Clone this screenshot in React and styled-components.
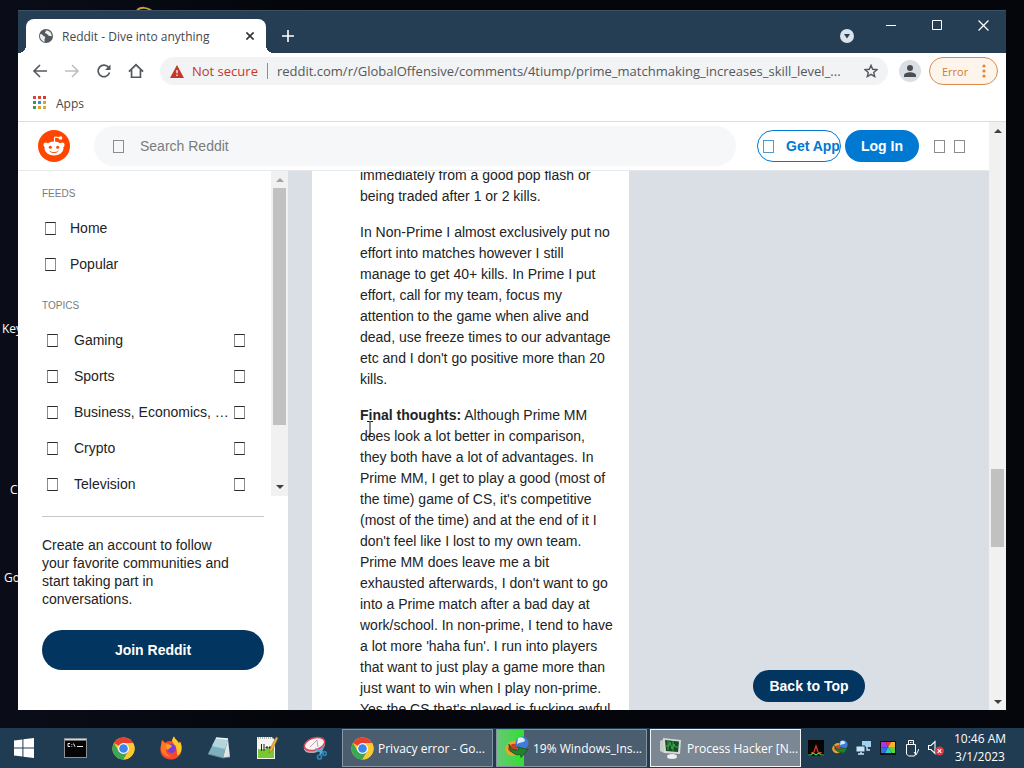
import React from "react";
import styled, { createGlobalStyle, css } from "styled-components";

const uiFont = `"Open Sans", "Noto Sans", sans-serif`;
const pageFont = `"Liberation Sans", Arial, sans-serif`;

const GlobalStyle = createGlobalStyle`
  *, *::before, *::after {
    box-sizing: border-box;
  }
  body {
    margin: 0;
    background: #04060b;
  }
  button, input {
    font: inherit;
    color: inherit;
    border: 0;
    padding: 0;
    margin: 0;
    background: none;
  }
  p, h2, ul {
    margin: 0;
    padding: 0;
  }
  ul {
    list-style: none;
  }
  a {
    color: inherit;
    text-decoration: none;
  }
  svg {
    display: block;
    flex: none;
  }
`;

const Screen = styled.div`
  display: flex;
  flex-direction: column;
  height: 100vh;
  overflow: hidden;
  font-family: ${uiFont};
  font-size: 12px;
  background: linear-gradient(90deg, #0a0d18 0, #04060b 30%);
`;

const Desktop = styled.div`
  position: relative;
  display: flex;
  flex: 1;
  min-height: 0;
  padding: 10px 18px 18px;
`;

const DesktopLabel = styled.span`
  position: absolute;
  left: ${({ $left }) => $left}px;
  top: ${({ $top }) => $top}px;
  line-height: 16px;
  color: #fff;
`;

const DesktopMark = styled.svg`
  position: absolute;
  left: 134px;
  top: 6px;
`;

const Window = styled.main`
  position: relative;
  display: flex;
  flex: 1;
  flex-direction: column;
  min-width: 0;
  min-height: 0;
  overflow: hidden;
  background: #fff;
`;

/* browser chrome */

const TitleBar = styled.div`
  display: flex;
  align-items: flex-start;
  height: 43px;
  flex: none;
  padding-left: 8px;
  background: #253e53;
  border-top: 1px solid #3c5164;
  color: #fff;
`;

const Tab = styled.div`
  position: relative;
  display: flex;
  align-items: center;
  gap: 8px;
  width: 240px;
  height: 34px;
  margin-top: 8px;
  padding: 0 8px 0 12px;
  border-radius: 8px 8px 0 0;
  background: #fff;
  color: #45494d;

  &::before,
  &::after {
    content: "";
    position: absolute;
    bottom: 0;
    width: 8px;
    height: 8px;
  }
  &::before {
    right: 100%;
    background: radial-gradient(circle at 0 0, #253e53 8px, #fff 8px);
  }
  &::after {
    left: 100%;
    background: radial-gradient(circle at 100% 0, #253e53 8px, #fff 8px);
  }
`;

const TabTitle = styled.span`
  flex: 1;
  white-space: nowrap;
`;

const IconButton = styled.button`
  display: flex;
  align-items: center;
  justify-content: center;
  flex: none;
  width: ${({ $size = 32 }) => $size}px;
  height: ${({ $size = 32 }) => $size}px;
  color: ${({ $color = "#54585c" }) => $color};
`;

const NewTab = styled(IconButton)`
  margin: 9px 0 0 6px;
`;

const SearchTabs = styled(IconButton)`
  margin: 9px 5px 0 auto;
`;

const WindowButtons = styled.div`
  display: flex;
`;

const WindowButton = styled.button`
  display: flex;
  align-items: center;
  justify-content: center;
  width: 46px;
  height: 28px;
  color: #fff;
`;

const Toolbar = styled.div`
  display: flex;
  align-items: center;
  height: 36px;
  flex: none;
  padding: 0 8px 0 6px;
`;

const AddressBar = styled.div`
  display: flex;
  align-items: center;
  flex: 1;
  min-width: 0;
  height: 28px;
  margin: 0 11px 0 8px;
  padding: 0 3px 0 10px;
  border-radius: 14px;
  background: #f1f3f4;
`;

const NotSecure = styled.button`
  display: flex;
  align-items: center;
  gap: 8px;
  padding-right: 9px;
  border-right: 1px solid #8b8f93;
  font-size: 13px;
  line-height: 16px;
  color: #c5372c;
  white-space: nowrap;
`;

const UrlInput = styled.input`
  flex: 1;
  min-width: 0;
  margin-left: 9px;
  outline: 0;
  font-size: 13px;
  line-height: 20px;
  color: #54585c;
  text-overflow: ellipsis;
`;

const Avatar = styled.button`
  display: flex;
  align-items: center;
  justify-content: center;
  width: 22px;
  height: 22px;
  margin-right: 8px;
  border-radius: 50%;
  background: #dadee5;
`;

const ErrorButton = styled.button`
  display: flex;
  align-items: center;
  justify-content: space-between;
  width: 69px;
  height: 28px;
  padding: 0 11px 0 12px;
  border: 1px solid #d98b4a;
  border-radius: 14px;
  background: #fdf5ec;
  font-size: 11px;
  color: #d47a2e;
`;

const Bookmarks = styled.div`
  display: flex;
  align-items: center;
  height: 33px;
  flex: none;
  padding: 0 14px 4px;
  border-bottom: 1px solid #d9dce0;
  color: #45494d;
`;

const AppsButton = styled.button`
  display: flex;
  align-items: center;
  gap: 10px;
`;

/* web page */

const Viewport = styled.div`
  display: flex;
  flex: 1;
  min-height: 0;
  font-family: ${pageFont};
  font-size: 14px;
  color: #222324;
`;

const Page = styled.div`
  display: flex;
  flex: 1;
  flex-direction: column;
  min-width: 0;
`;

const Header = styled.header`
  display: flex;
  align-items: center;
  height: 49px;
  flex: none;
  padding: 0 24px 0 20px;
  border-bottom: 1px solid #e6e8eb;
`;

const Search = styled.label`
  display: flex;
  align-items: center;
  flex: 1;
  gap: 16px;
  min-width: 0;
  height: 40px;
  margin: 0 21px 0 24px;
  padding: 0 19px;
  border-radius: 20px;
  background: #f6f7f8;
`;

const SearchInput = styled.input`
  flex: 1;
  min-width: 0;
  outline: 0;

  &::placeholder {
    color: #787c7e;
    opacity: 1;
  }
`;

const MissingGlyph = styled.span`
  display: inline-block;
  flex: none;
  width: 11px;
  height: 13px;
  border: 1px solid;
  border-color: ${({ $tone = "#2c2c2c" }) => $tone} #8c8c8c;
`;

const pill = css`
  display: flex;
  align-items: center;
  justify-content: center;
  height: 32px;
  border-radius: 20px;
  font-weight: 700;
  white-space: nowrap;
`;

const GetApp = styled.button`
  ${pill};
  justify-content: flex-start;
  gap: 12px;
  width: 84px;
  padding-left: 5px;
  border: 1px solid #0079d3;
  color: #0079d3;
`;

const LogIn = styled.button`
  ${pill};
  width: 74px;
  margin: 0 15px 0 4px;
  background: #0079d3;
  color: #fff;
`;

const HeaderIcons = styled.div`
  display: flex;
  gap: 9px;
`;

const Body = styled.div`
  position: relative;
  display: flex;
  flex: 1;
  min-height: 0;
  overflow: hidden;
  background: #dadee5;
`;

const Sidebar = styled.aside`
  display: flex;
  flex-direction: column;
  flex: none;
  width: 270px;
  background: #fff;
`;

const SidebarScroll = styled.div`
  display: flex;
  flex: 1;
  min-height: 0;
`;

const Nav = styled.nav`
  flex: 1;
  min-width: 0;
  overflow: hidden;
  padding: 0 26px 0 24px;
`;

const NavTitle = styled.h2`
  padding: 15px 0 9px;
  font-size: 10px;
  font-weight: 400;
  line-height: 15px;
  text-transform: uppercase;
  color: #787c7e;
`;

const NavList = styled.ul`
  padding-bottom: 1px;
`;

const NavLink = styled.a`
  display: flex;
  align-items: center;
  gap: 14px;
  height: 36px;
  padding-left: 3px;
`;

const TopicButton = styled.button`
  display: flex;
  align-items: center;
  justify-content: space-between;
  width: 100%;
  height: 36px;
  padding-left: 5px;
  text-align: left;
`;

const TopicName = styled.span`
  display: flex;
  align-items: center;
  gap: 16px;
  line-height: 18px;
  white-space: nowrap;
`;

const SignUp = styled.section`
  flex: none;
  margin: 20px 24px 0;
  padding: 19px 0 40px;
  border-top: 1px solid #c4c7ca;
`;

const SignUpText = styled.p`
  max-width: 192px;
  line-height: 18px;
`;

const JoinButton = styled.button`
  ${pill};
  width: 100%;
  height: 40px;
  margin-top: 22px;
  background: #02355f;
  color: #fff;
`;

const Post = styled.article`
  flex: 0 1 317px;
  align-self: flex-start;
  margin-left: 24px;
  padding: 0 16px 0 48px;
  background: #fff;
`;

const PostText = styled.div`
  display: grid;
  gap: 15px;
  margin-top: -6px;
  line-height: 21px;
`;

const BackToTop = styled.button`
  ${pill};
  position: absolute;
  right: 124px;
  bottom: 8px;
  width: 112px;
  background: #02355f;
  color: #fff;
`;

const Cursor = styled.svg`
  position: absolute;
  left: 348px;
  top: 250px;
`;

const Scrollbar = styled.div`
  display: grid;
  grid-template-rows: 17px ${({ $before }) => $before}fr ${({ $thumb }) => $thumb}fr ${({ $after }) => $after}fr 17px;
  flex: none;
  width: 17px;
  background: #f1f1f1;
`;

const Thumb = styled.span`
  grid-row: 3;
  margin: 0 2px;
  background: #c1c1c1;
`;

const ScrollArrow = styled.button`
  grid-row: ${({ $down }) => ($down ? 5 : 1)};
  display: flex;
  align-items: center;
  justify-content: center;
  color: ${({ $off }) => ($off ? "#a3a3a3" : "#404040")};
`;

/* taskbar */

const Taskbar = styled.footer`
  display: flex;
  gap: 3px;
  height: 40px;
  flex: none;
  background: #203c53;
  color: #fff;
`;

const StartButton = styled.button`
  display: flex;
  align-items: center;
  justify-content: center;
  width: 48px;
`;

const Pinned = styled.div`
  display: flex;
`;

const PinnedButton = styled(StartButton)``;

const Task = styled.button`
  display: flex;
  align-items: center;
  gap: 4px;
  flex: 0 1 151px;
  min-width: 0;
  height: 38px;
  margin-top: 1px;
  padding: 0 0 0 8px;
  border: 1px solid ${({ $active }) => ($active ? "#f2f4f6" : "#8795a3")};
  background: ${({ $active }) => ($active ? "#7b8792" : "#4b5e70")};
  ${({ $progress }) =>
    $progress &&
    css`
      background: linear-gradient(90deg, #68c878, #2fe02f ${$progress}%, #4b5e70 ${$progress}%);
    `}
`;

const TaskTitle = styled.span`
  flex: 1;
  min-width: 0;
  font-size: 12px;
  text-align: left;
  white-space: nowrap;
`;

const Tray = styled.div`
  display: flex;
  align-items: center;
  margin-left: auto;
`;

const TrayButton = styled.button`
  display: flex;
  align-items: center;
  justify-content: center;
  width: 24px;
  height: 40px;
`;

const Clock = styled.time`
  width: 64px;
  margin-right: 12px;
  line-height: 18px;
  text-align: center;
  white-space: nowrap;
`;

/* drawings */

const GlobeIcon = () => (
  <svg width="16" height="16" viewBox="0 0 16 16">
    <circle cx="8" cy="8" r="7" fill="#54585c" />
    <path d="M2 6.500C3 6 4.500 6.400 4.800 7.300c.4 1 2 .8 2.400 1.900.4 1-.9 1.300-.7 2.300.1.900.4 1.700-.2 2.400C3.500 13 1.500 10 2 6.500z" fill="#eceef0" />
    <path d="M7.500 2.200c1 .6.300 1.500-.4 1.900-.7.600.5 1.500 1.500 1.700 1.200.2 1 1.900 2.300 2 .9 0 1.800.5 2.900.5.100-3-1.800-5.700-6.300-6.100z" fill="#eceef0" />
  </svg>
);

const Cross = ({ size = 8, weight = 1.6 }) => (
  <svg width={size} height={size} viewBox="0 0 8 8" stroke="currentColor" strokeWidth={weight}>
    <path d="M.4.4l7.200 7.200M7.600.4L.4 7.600" />
  </svg>
);

const PlusIcon = () => (
  <svg width="12" height="12" viewBox="0 0 12 12" stroke="#fff" strokeWidth="1.600">
    <path d="M6 0v12M0 6h12" />
  </svg>
);

const TabSearchIcon = () => (
  <svg width="14" height="14" viewBox="0 0 14 14">
    <circle cx="7" cy="7" r="7" fill="#dbe2ea" />
    <path d="M4 5h6L7 9.500z" fill="#253e53" />
  </svg>
);

const ArrowIcon = ({ forward }) => (
  <svg width="16" height="16" viewBox="0 0 16 16" fill="none" stroke="currentColor" strokeWidth="1.600">
    {forward ? <path d="M1 8h13M8 2l6 6-6 6" /> : <path d="M15 8H2M8 2L2 8l6 6" />}
  </svg>
);

const ReloadIcon = () => (
  <svg width="16" height="16" viewBox="0 0 16 16">
    <path d="M12.600 4.500A5.800 5.800 0 1 0 13.500 9.500" fill="none" stroke="currentColor" strokeWidth="1.700" />
    <path d="M14.500 1.500v5.500H9z" fill="currentColor" />
  </svg>
);

const HomeIcon = () => (
  <svg width="16" height="16" viewBox="0 0 18 18" fill="none" stroke="currentColor" strokeWidth="1.900">
    <path d="M1 9.800L9 2l8 7.800M4 8v8h10V8" />
  </svg>
);

const WarningIcon = () => (
  <svg width="14" height="13" viewBox="0 0 14 13">
    <path d="M7 0l7 13H0z" fill="#c5372c" />
    <path d="M7 5v3.300M7 9.500V11" stroke="#f1f3f4" strokeWidth="1.400" />
  </svg>
);

const StarIcon = () => (
  <svg width="14" height="14" viewBox="0 0 14 14" fill="none" stroke="currentColor" strokeWidth="1.400">
    <path d="M7 1.400l1.700 3.900 4.200.4-3.200 2.800 1 4.100L7 10.400l-3.700 2.200 1-4.100L1.100 5.700l4.200-.4z" />
  </svg>
);

const PersonIcon = () => (
  <svg width="12" height="12" viewBox="0 0 12 12" fill="#4a4e54">
    <circle cx="6" cy="3" r="3" />
    <path d="M0 12V10.500C0 8.300 3.500 7.300 6 7.300s6 1 6 3.200V12z" />
  </svg>
);

const DotsIcon = () => (
  <svg width="4" height="14" viewBox="0 0 4 14" fill="#e2892c">
    <circle cx="2" cy="2" r="1.600" />
    <circle cx="2" cy="7" r="1.600" />
    <circle cx="2" cy="12" r="1.600" />
  </svg>
);

const appDots = ["#d24a3d", "#d24a3d", "#c9402f", "#3b9a58", "#4285d8", "#d9a62c", "#3b9a58", "#dba52a", "#e0a929"];

const AppsIcon = () => (
  <svg width="14" height="14" viewBox="0 0 14 14">
    {appDots.map((color, i) => (
      <rect key={i} x={(i % 3) * 5 + 1} y={Math.floor(i / 3) * 5} width="3" height="3" fill={color} />
    ))}
  </svg>
);

const RedditLogo = () => (
  <svg width="32" height="32" viewBox="0 0 32 32">
    <circle cx="16" cy="16" r="16" fill="#ff4500" />
    <path d="M16.500 12V8.200q0-1.200 1.300-1.100l4.200.7" fill="none" stroke="#fff" strokeWidth="1.200" />
    <circle cx="22.500" cy="8" r="1.800" fill="#fff" />
    <circle cx="7.800" cy="15" r="2.400" fill="#fff" />
    <circle cx="24.200" cy="15" r="2.400" fill="#fff" />
    <ellipse cx="16" cy="18.500" rx="9.500" ry="7" fill="#fff" />
    <circle cx="12.300" cy="17.300" r="1.500" fill="#ff4500" />
    <circle cx="19.700" cy="17.300" r="1.500" fill="#ff4500" />
    <path d="M12 21.300c2 1.900 6 1.900 8 0" fill="none" stroke="#ff4500" strokeWidth="1" strokeLinecap="round" />
  </svg>
);

const Triangle = ({ down }) => (
  <svg width="8" height="4" viewBox="0 0 8 4" fill="currentColor">
    <path d={down ? "M0 0h8L4 4z" : "M0 4h8L4 0z"} />
  </svg>
);

const WindowsLogo = () => (
  <svg width="20" height="20" viewBox="0 0 20 20" fill="#fff">
    <path d="M0 2.600l8.400-1.200v8.100H0zM9.400 1.300L20 0v9.500H9.400zM0 10.500h8.400v8.100L0 17.400zM9.400 10.500H20V20L9.400 18.700z" />
  </svg>
);

const TerminalIcon = () => (
  <svg width="23" height="20" viewBox="0 0 23 20">
    <rect x=".5" y=".5" width="22" height="19" fill="#050505" stroke="#8b9196" />
    <path d="M1 1h21v1.500H1z" fill="#d5d8da" />
    <path d="M6 5.500H4v3h2M7.800 6v.8M7.800 8v.8M9.500 5.500l1.500 3.300M13 8.500h6" stroke="#eee" fill="none" />
  </svg>
);

const ChromeIcon = () => (
  <svg width="23" height="23" viewBox="0 0 24 24">
    <circle cx="12" cy="12" r="11.500" fill="#fbc931" />
    <path d="M12 12L2.040 6.250A11.500 11.500 0 0 1 22 6.250H12z" fill="#e6412f" />
    <path d="M2.040 6.250A11.500 11.500 0 0 0 12 23.500l5-8.600L7 14.900z" fill="#3aa757" />
    <path d="M22 6.250H12l5 8.650-5 8.600A11.500 11.500 0 0 0 22 6.250z" fill="#fbc931" />
    <circle cx="12" cy="12" r="5.700" fill="#fff" />
    <circle cx="12" cy="12" r="4.500" fill="#3f83ee" />
  </svg>
);

const FirefoxIcon = () => (
  <svg width="24" height="24" viewBox="0 0 24 24">
    <path d="M2 9l1-5 3 3c2-2 4-2 7-2 .5-2 1-3.500 2-4.500 1 3 4 4 5 7l1-2c3 6 2 12-2 15.500-5 4-12 3-15.500-1C1 17 .8 12 2 9z" fill="#f4472f" />
    <path d="M13 5c.5-2 1-3.500 2-4.500 1 3 4 4 5 7l1-2c3 6 1.500 11-1.500 13.500C17 21 19 13 16 10z" fill="#ffc928" />
    <path d="M3 4l3 3 4 1-2 4c-3 4 1 8 5 8-6 2-11-2-11-8z" fill="#ff7a20" />
    <circle cx="12.500" cy="12.500" r="4.500" fill="#7a3fd0" />
    <path d="M7 9c3-1 5 0 6 1-1 2-3 2-4 4-2-1-2-3-2-5z" fill="#ffa025" />
  </svg>
);

const NotepadIcon = () => (
  <svg width="24" height="24" viewBox="0 0 24 24">
    <path d="M9 2l12 1-5 19L1 18z" fill="#7fb0bd" />
    <path d="M9 2l12 1-3 10L5 10z" fill="#b3d6dc" />
    <path d="M21 3l2 18-7 1z" fill="#dfe6e8" />
    <path d="M1 18l15 4 7-1" fill="none" stroke="#5c8792" />
    <path d="M9 2l12 1" stroke="#eef5f5" strokeWidth="1.500" />
  </svg>
);

const EditorIcon = () => (
  <svg width="24" height="24" viewBox="0 0 24 24">
    <path d="M2 1h15l3 3v19H2z" fill="#f4f5ee" />
    <path d="M3 13c6 1 11-1 16-3v12H3z" fill="#77c832" />
    <path d="M3 2h15" stroke="#777" strokeDasharray="1 1" />
    <path d="M6.500 8v7M9 8v7M10.500 11.500h2M13.500 11.500h2M12 10v3M15 10v3" stroke="#222" />
    <path d="M21 1l2 1-6 13-3 2 1-4z" fill="#e9b63a" stroke="#9a6b2a" strokeWidth=".600" />
  </svg>
);

const SnippingIcon = () => (
  <svg width="24" height="24" viewBox="0 0 24 24">
    <ellipse cx="11.500" cy="10" rx="11" ry="6.500" transform="rotate(-18 11.500 10)" fill="#b9a7b0" />
    <ellipse cx="11.500" cy="8" rx="10.500" ry="6" transform="rotate(-18 11.500 8)" fill="#f9f3f4" stroke="#d2455c" strokeWidth="1.500" />
    <path d="M7 11l7-7 1 7" fill="none" stroke="#bfa4ac" />
    <path d="M12 13l9 4M20 11l-3 8" stroke="#5aaad0" strokeWidth="2" />
    <circle cx="21.500" cy="17.500" r="1.800" fill="none" stroke="#2e84b5" strokeWidth="1.700" />
    <circle cx="16.500" cy="21" r="2" fill="none" stroke="#2e84b5" strokeWidth="1.700" />
  </svg>
);

const DownloadIcon = ({ size = 24 }) => (
  <svg width={size} height={size} viewBox="0 0 24 24">
    <path d="M0 13C2 6 7 3 13 5v13C7 22 1 19 0 13z" fill="#e5a72e" />
    <path d="M3 13c1-4 4-6 9-5v8c-4 2-8 0-9-3z" fill="#c5432b" />
    <circle cx="17" cy="7" r="6.500" fill="#3f7bd8" />
    <path d="M13 2c3-2 7 0 7 3-3 2-5 1-8 3z" fill="#dceafa" />
    <path d="M4 8c1 5 5 7 10 5.500L12 11l11 2.500-7 8-.5-3C9 20 4 15 4 8z" fill="#23802b" stroke="#12501a" strokeWidth=".800" />
  </svg>
);

const MonitorIcon = () => (
  <svg width="24" height="24" viewBox="0 0 24 24">
    <path d="M1 5l4-2v14l-4-2z" fill="#c8ccc8" />
    <path d="M4 2l18 2-1 14-16-1z" fill="#d5dad5" />
    <path d="M6 4l14 1.500L19 16 7 15z" fill="#174f25" />
    <path d="M7 10h3l1-4 2 7 2-5 1 3h3M9 5v9M14 5v10" fill="none" stroke="#48b556" strokeWidth=".800" />
    <ellipse cx="13" cy="20.500" rx="5" ry="2.500" fill="#edf0ed" />
  </svg>
);

const GraphIcon = () => (
  <svg width="16" height="16" viewBox="0 0 16 16">
    <path d="M0 0h16v16H0z" fill="#050505" />
    <path d="M3 13l3-1 2-6 2 6 4 1" fill="none" stroke="#e8352a" strokeWidth="1.200" />
    <path d="M0 15h3l2-2 3 2 3-2 2 2h3" fill="none" stroke="#43cf3a" strokeWidth="1.200" />
  </svg>
);

const NetworkIcon = () => (
  <svg width="16" height="16" viewBox="0 0 16 16">
    <path d="M6 1h9v6H6z" fill="#9fd0ee" />
    <path d="M0 6h9v6H0z" fill="#c8e4f5" stroke="#203c53" />
    <path d="M2 14h6M5 12v2M11 7v3h3" stroke="#c8e4f5" fill="none" strokeWidth="1.400" />
  </svg>
);

const PaletteIcon = () => (
  <svg width="16" height="16" viewBox="0 0 16 16">
    <path d="M0 1h16v14H0z" fill="#111" />
    <path d="M1 2h5l2 5-7 1z" fill="#a23be0" />
    <path d="M6 2h5L8 7z" fill="#ef3340" />
    <path d="M11 2h4v5H8z" fill="#f3b52f" />
    <path d="M8 7h7v6h-3z" fill="#5bd436" />
    <path d="M8 7l4 6H5z" fill="#25d2c0" />
    <path d="M1 8l7-1-3 6H1z" fill="#2e6df0" />
  </svg>
);

const UsbIcon = () => (
  <svg width="14" height="17" viewBox="0 0 14 17" fill="none" stroke="#fff">
    <path d="M3.500 4.500v-4h5v4M5 2.500h.8M6.500 2.500h.8M1.500 4.500h9V14l-1 2h-6l-2-2zM9 12l2 3 3-6" />
  </svg>
);

const MutedIcon = () => (
  <svg width="16" height="16" viewBox="0 0 16 16">
    <path d="M.5 5.500h2.500l4-4v12l-4-4H.5z" fill="none" stroke="#fff" strokeWidth="1.100" />
    <circle cx="11.500" cy="11" r="4.500" fill="#d93a3f" />
    <path d="M9.700 9.200l3.600 3.600M13.300 9.200l-3.600 3.600" stroke="#fff" strokeWidth="1.200" />
  </svg>
);

const topics = ["Gaming", "Sports", "Business, Economics, …", "Crypto", "Television"];

const pinned = [
  ["Command Prompt", TerminalIcon],
  ["Google Chrome", ChromeIcon],
  ["Firefox", FirefoxIcon],
  ["Notepad", NotepadIcon],
  ["Notepad++", EditorIcon],
  ["Snipping Tool", SnippingIcon],
];

const tray = [
  ["Process Hacker", <GraphIcon />],
  ["Download manager", <DownloadIcon size={16} />],
  ["Network", <NetworkIcon />],
  ["Display", <PaletteIcon />],
  ["Removable devices", <UsbIcon />],
  ["Volume", <MutedIcon />],
];

const ScrollTrack = ({ before, thumb, after, atTop }) => (
  <Scrollbar $before={before} $thumb={thumb} $after={after}>
    <ScrollArrow $off={atTop} aria-label="Scroll up">
      <Triangle />
    </ScrollArrow>
    <Thumb />
    <ScrollArrow $down aria-label="Scroll down">
      <Triangle down />
    </ScrollArrow>
  </Scrollbar>
);

const BrowserChrome = () => (
  <>
    <TitleBar>
      <Tab>
        <GlobeIcon />
        <TabTitle>Reddit - Dive into anything</TabTitle>
        <IconButton $size={16} $color="#303438" aria-label="Close tab">
          <Cross />
        </IconButton>
      </Tab>
      <NewTab aria-label="New tab">
        <PlusIcon />
      </NewTab>
      <SearchTabs aria-label="Search tabs">
        <TabSearchIcon />
      </SearchTabs>
      <WindowButtons>
        <WindowButton aria-label="Minimize">
          <svg width="10" height="1" viewBox="0 0 10 1">
            <path d="M0 0h10v1H0z" fill="#fff" />
          </svg>
        </WindowButton>
        <WindowButton aria-label="Maximize">
          <svg width="10" height="10" viewBox="0 0 10 10">
            <path d="M.5.5h9v9h-9z" fill="none" stroke="#fff" />
          </svg>
        </WindowButton>
        <WindowButton aria-label="Close">
          <Cross size={11} weight={0.9} />
        </WindowButton>
      </WindowButtons>
    </TitleBar>
    <Toolbar>
      <IconButton aria-label="Back">
        <ArrowIcon />
      </IconButton>
      <IconButton $color="#bcbfc2" aria-label="Forward">
        <ArrowIcon forward />
      </IconButton>
      <IconButton aria-label="Reload">
        <ReloadIcon />
      </IconButton>
      <IconButton aria-label="Home">
        <HomeIcon />
      </IconButton>
      <AddressBar>
        <NotSecure>
          <WarningIcon />
          Not secure
        </NotSecure>
        <UrlInput
          aria-label="Address"
          defaultValue="reddit.com/r/GlobalOffensive/comments/4tiump/prime_matchmaking_increases_skill_level_..."
        />
        <IconButton $size={28} aria-label="Bookmark this page">
          <StarIcon />
        </IconButton>
      </AddressBar>
      <Avatar aria-label="Profile">
        <PersonIcon />
      </Avatar>
      <ErrorButton>
        Error
        <DotsIcon />
      </ErrorButton>
    </Toolbar>
    <Bookmarks>
      <AppsButton>
        <AppsIcon />
        Apps
      </AppsButton>
    </Bookmarks>
  </>
);

const App = () => (
  <>
    <GlobalStyle />
    <Screen>
      <Desktop>
        <DesktopLabel $left={2} $top={321}>Key</DesktopLabel>
        <DesktopLabel $left={10} $top={482}>C</DesktopLabel>
        <DesktopLabel $left={4} $top={570}>Go</DesktopLabel>
        <DesktopMark width="20" height="8" viewBox="0 0 20 8">
          <path d="M3 4c4-3 10-3 15 1" fill="none" stroke="#c9a02c" strokeWidth="2" />
        </DesktopMark>
        <Window>
          <BrowserChrome />
          <Viewport>
            <Page>
              <Header>
                <a href="#home" aria-label="Reddit">
                  <RedditLogo />
                </a>
                <Search>
                  <MissingGlyph $tone="#8c8c8c" />
                  <SearchInput type="search" placeholder="Search Reddit" aria-label="Search Reddit" />
                </Search>
                <GetApp>
                  <MissingGlyph $tone="#4c9ad0" />
                  Get App
                </GetApp>
                <LogIn>Log In</LogIn>
                <HeaderIcons>
                  <MissingGlyph $tone="#8c8c8c" />
                  <MissingGlyph $tone="#8c8c8c" />
                </HeaderIcons>
              </Header>
              <Body>
                <Sidebar>
                  <SidebarScroll>
                    <Nav>
                      <NavTitle>Feeds</NavTitle>
                      <NavList>
                        <li>
                          <NavLink href="#home">
                            <MissingGlyph />
                            Home
                          </NavLink>
                        </li>
                        <li>
                          <NavLink href="#popular">
                            <MissingGlyph />
                            Popular
                          </NavLink>
                        </li>
                      </NavList>
                      <NavTitle>Topics</NavTitle>
                      <NavList>
                        {topics.map((topic) => (
                          <li key={topic}>
                            <TopicButton>
                              <TopicName>
                                <MissingGlyph />
                                {topic}
                              </TopicName>
                              <MissingGlyph />
                            </TopicButton>
                          </li>
                        ))}
                      </NavList>
                    </Nav>
                    <ScrollTrack before={0} thumb={236} after={54} atTop />
                  </SidebarScroll>
                  <SignUp>
                    <SignUpText>
                      Create an account to follow your favorite communities and start taking part in conversations.
                    </SignUpText>
                    <JoinButton>Join Reddit</JoinButton>
                  </SignUp>
                </Sidebar>
                <Post>
                  <PostText>
                    <p>immediately from a good pop flash or being traded after 1 or 2 kills.</p>
                    <p>
                      In Non-Prime I almost exclusively put no effort into matches however I still manage to get 40+
                      kills. In Prime I put effort, call for my team, focus my attention to the game when alive and
                      dead, use freeze times to our advantage etc and I don't go positive more than 20 kills.
                    </p>
                    <p>
                      <strong>Final thoughts:</strong> Although Prime MM does look a lot better in comparison, they
                      both have a lot of advantages. In Prime MM, I get to play a good (most of the time) game of CS,
                      it's competitive (most of the time) and at the end of it I don't feel like I lost to my own
                      team. Prime MM does leave me a bit exhausted afterwards, I don't want to go into a Prime match
                      after a bad day at work/school. In non-prime, I tend to have a lot more 'haha fun'. I run into
                      players that want to just play a game more than just want to win when I play non-prime. Yes the
                      CS that's played is fucking awful
                    </p>
                  </PostText>
                </Post>
                <BackToTop>Back to Top</BackToTop>
                <Cursor width="8" height="16" viewBox="0 0 8 16" fill="none" stroke="#111">
                  <path d="M1 .5h2.500l.5.500.5-.5H7M4 1v14M1 15.500h2.500L4 15l.5.500H7" />
                </Cursor>
              </Body>
            </Page>
            <ScrollTrack before={330} thumb={78} after={146} />
          </Viewport>
        </Window>
      </Desktop>
      <Taskbar>
        <StartButton aria-label="Start">
          <WindowsLogo />
        </StartButton>
        <Pinned>
          {pinned.map(([name, Icon]) => (
            <PinnedButton key={name} aria-label={name}>
              <Icon />
            </PinnedButton>
          ))}
        </Pinned>
        <Task>
          <ChromeIcon />
          <TaskTitle>Privacy error - Go...</TaskTitle>
        </Task>
        <Task $progress={18}>
          <DownloadIcon />
          <TaskTitle>19% Windows_Ins...</TaskTitle>
        </Task>
        <Task $active>
          <MonitorIcon />
          <TaskTitle>Process Hacker [N...</TaskTitle>
        </Task>
        <Tray>
          {tray.map(([name, icon]) => (
            <TrayButton key={name} aria-label={name}>
              {icon}
            </TrayButton>
          ))}
          <Clock>
            10:46 AM
            <br />
            3/1/2023
          </Clock>
        </Tray>
      </Taskbar>
    </Screen>
  </>
);

export default App;
